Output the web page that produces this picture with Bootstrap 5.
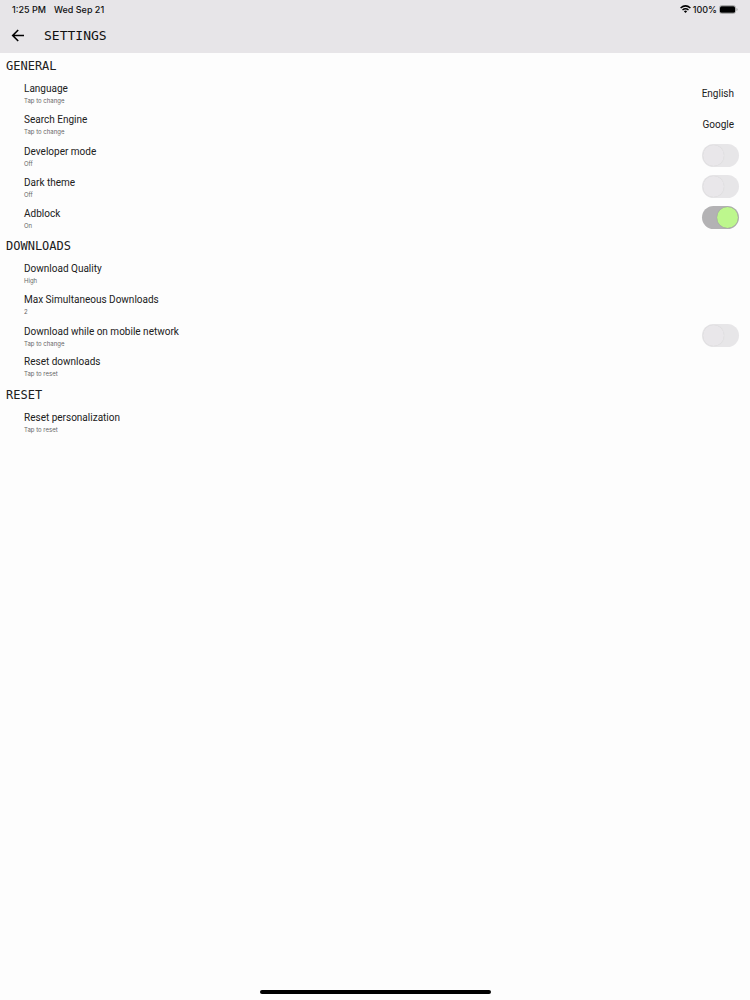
<!DOCTYPE html>
<html lang="en">
<head>
<meta charset="utf-8">
<meta name="viewport" content="width=device-width, initial-scale=1">
<title>Settings</title>
<link href="https://cdn.jsdelivr.net/npm/bootstrap@5.3.0/dist/css/bootstrap.min.css" rel="stylesheet">
<style>
body { background: #fdfdfd; color: #202020; font-family: Roboto, sans-serif; font-size: 10px; line-height: 15px; }
.top-area { background: #e7e5e8; color: #111; }
.status { font-family: Inter, sans-serif; font-size: 9px; font-weight: 500; height: 18px; padding: 0 12px; }
.status-right { gap: 2px; }
.title-bar { height: 35px; padding: 0 11px; gap: 19px; }
.title-bar h1, .group-title { font-family: "DejaVu Sans Mono", monospace; font-weight: 400; }
.title-bar h1 { font-size: 13px; line-height: 16px; }
.group-title { font-size: 12px; line-height: 24px; padding: 1px 0 0 6px; }
.setting { height: 31px; padding: 0 11px 1px 24px; color: inherit; }
.setting-name { line-height: 15px; }
.setting-note { font-family: Inter, sans-serif; font-size: 6px; line-height: 9px; color: #666; }
.setting-value { padding-right: 5px; }
.switch { appearance: none; width: 37px; height: 23px; border-radius: 12px; background: #e7e6e8; padding: 1px; cursor: pointer; }
.switch::before { content: ""; display: block; width: 21px; height: 21px; border-radius: 50%; background: #e9e7ea; box-shadow: 0 0 1px #ccc; }
.switch:checked { background: #b3b2b4; }
.switch:checked::before { margin-left: auto; background: #bdf78d; box-shadow: 0 0 1px #888; }
.setting-toggle { padding-bottom: 0; }
.home-bar { width: 231px; height: 4px; background: #000; margin-bottom: 6px; }
</style>
</head>
<body class="d-flex flex-column min-vh-100">
<header class="top-area">
  <div class="status d-flex justify-content-between align-items-center">
    <div class="d-flex gap-2"><span>1:25 PM</span><span>Wed Sep 21</span></div>
    <div class="status-right d-flex align-items-center">
      <svg width="11" height="8" viewBox="0 0 11 8" fill="none" stroke="#000" stroke-width="1.5" aria-label="Wi-Fi"><path d="M.6 3Q5.500-1.300 10.400 3M2.500 5Q5.500 2.500 8.500 5"/><path d="M3.900 6.200Q5.500 5 7.100 6.200L5.500 7.900Z" fill="#000" stroke="none"/></svg>
      <span>100%</span>
      <svg width="19" height="9" viewBox="0 0 19 9" aria-label="Battery full"><rect x=".5" y=".5" width="16" height="8" rx="2.300" fill="none" stroke="#aaa"/><rect x="1" y="1.200" width="15" height="6.600" rx="1.500"/><path d="M17.500 3v3q1-.3 1-1.500t-1-1.500" fill="#999"/></svg>
    </div>
  </div>
  <div class="title-bar d-flex align-items-center">
    <button type="button" class="border-0 bg-transparent p-0 d-flex" aria-label="Back"><svg width="14" height="14" viewBox="0 0 14 14" fill="none" stroke="#000" stroke-width="1.600"><path d="M13 6.500H2M7.200 1 1.700 6.500l5.500 5.500"/></svg></button>
    <h1 class="m-0">SETTINGS</h1>
  </div>
</header>
<main class="flex-grow-1">
  <section>
    <h2 class="group-title m-0">GENERAL</h2>
    <button type="button" class="setting w-100 border-0 bg-transparent text-start d-flex align-items-center justify-content-between"><span><span class="setting-name d-block">Language</span><span class="setting-note d-block">Tap to change</span></span><span class="setting-value">English</span></button>
    <button type="button" class="setting w-100 border-0 bg-transparent text-start d-flex align-items-center justify-content-between"><span><span class="setting-name d-block">Search Engine</span><span class="setting-note d-block">Tap to change</span></span><span class="setting-value">Google</span></button>
    <div class="setting setting-toggle d-flex align-items-center justify-content-between"><label for="developer"><span class="setting-name d-block">Developer mode</span><span class="setting-note d-block">Off</span></label><input class="switch m-0" type="checkbox" role="switch" id="developer"></div>
    <div class="setting setting-toggle d-flex align-items-center justify-content-between"><label for="dark"><span class="setting-name d-block">Dark theme</span><span class="setting-note d-block">Off</span></label><input class="switch m-0" type="checkbox" role="switch" id="dark"></div>
    <div class="setting setting-toggle d-flex align-items-center justify-content-between"><label for="adblock"><span class="setting-name d-block">Adblock</span><span class="setting-note d-block">On</span></label><input class="switch m-0" type="checkbox" role="switch" id="adblock" checked></div>
  </section>
  <section>
    <h2 class="group-title m-0">DOWNLOADS</h2>
    <button type="button" class="setting w-100 border-0 bg-transparent text-start d-flex align-items-center"><span><span class="setting-name d-block">Download Quality</span><span class="setting-note d-block">High</span></span></button>
    <button type="button" class="setting w-100 border-0 bg-transparent text-start d-flex align-items-center"><span><span class="setting-name d-block">Max Simultaneous Downloads</span><span class="setting-note d-block">2</span></span></button>
    <div class="setting setting-toggle d-flex align-items-center justify-content-between"><label for="mobile"><span class="setting-name d-block">Download while on mobile network</span><span class="setting-note d-block">Tap to change</span></label><input class="switch m-0" type="checkbox" role="switch" id="mobile"></div>
    <button type="button" class="setting w-100 border-0 bg-transparent text-start d-flex align-items-center"><span><span class="setting-name d-block">Reset downloads</span><span class="setting-note d-block">Tap to reset</span></span></button>
  </section>
  <section>
    <h2 class="group-title m-0">RESET</h2>
    <button type="button" class="setting w-100 border-0 bg-transparent text-start d-flex align-items-center"><span><span class="setting-name d-block">Reset personalization</span><span class="setting-note d-block">Tap to reset</span></span></button>
  </section>
</main>
<div class="home-bar rounded-pill mx-auto"></div>
<script src="https://cdn.jsdelivr.net/npm/bootstrap@5.3.0/dist/js/bootstrap.bundle.min.js"></script>
</body>
</html>
